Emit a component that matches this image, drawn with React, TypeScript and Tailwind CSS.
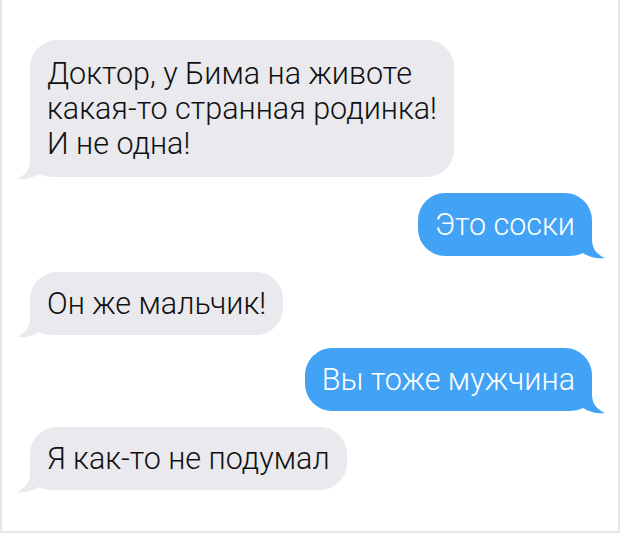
type Msg = { side: "in" | "out"; lines: string[]; mt: string };

const messages: Msg[] = [
  { side: "in", lines: ["Доктор, у Бима на животе", "какая-то странная родинка!", "И не одна!"], mt: "mt-0" },
  { side: "out", lines: ["Это соски"], mt: "mt-[16px]" },
  { side: "in", lines: ["Он же мальчик!"], mt: "mt-[16px]" },
  { side: "out", lines: ["Вы тоже мужчина"], mt: "mt-[13px]" },
  { side: "in", lines: ["Я как-то не подумал"], mt: "mt-[16px]" },
];

function Tail({ side }: { side: "in" | "out" }) {
  const fill = side === "in" ? "#e9e9ee" : "#42a3f6";
  return (
    <svg
      width="40"
      height="32"
      viewBox="0 0 40 32"
      className={
        side === "in"
          ? "absolute left-[-14px] bottom-[-3px]"
          : "absolute right-[-14px] bottom-[-3px] -scale-x-100"
      }
    >
      <path
        d="M14 0 L14 12 C14 21 10 27 1 31 C9 32 17 30 23 26 C27 28 31 29 40 29 L40 0 Z"
        fill={fill}
      />
    </svg>
  );
}

function Bubble({ msg }: { msg: Msg }) {
  const isIn = msg.side === "in";
  const multi = msg.lines.length > 1;
  return (
    <div className={`flex ${isIn ? "justify-start" : "justify-end"} ${msg.mt}`}>
      <div
        className={`relative rounded-[27px] px-[17px] ${multi ? "py-[16px]" : "py-[14px]"} text-[30.5px] leading-[35px] font-light whitespace-nowrap ${
          isIn ? "bg-[#e9e9ee] text-[#111111]" : "bg-[#42a3f6] text-white"
        }`}
      >
        <Tail side={msg.side} />
        <div className="relative">
          {msg.lines.map((l) => (
            <div key={l}>{l}</div>
          ))}
        </div>
      </div>
    </div>
  );
}

export default function App() {
  return (
    <div
      className="w-[620px] h-[533px] bg-white border-x-2 border-b-2 border-[#e6e6e6] flex flex-col pt-[40px] pl-[28px] pr-[26px]"
      style={{ fontFamily: "Roboto, 'Noto Sans', sans-serif" }}
    >
      {messages.map((m, i) => (
        <Bubble key={i} msg={m} />
      ))}
    </div>
  );
}
